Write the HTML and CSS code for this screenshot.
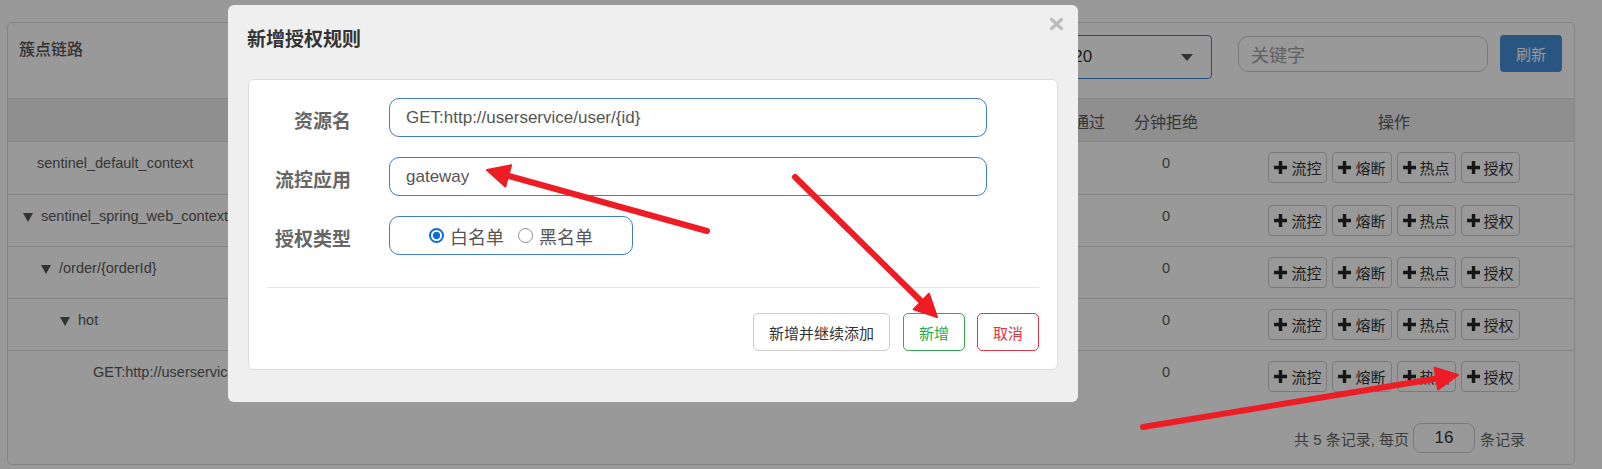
FILE: index.html
```html
<!DOCTYPE html>
<html lang="zh-CN">
<head>
<meta charset="utf-8">
<title>簇点链路</title>
<link rel="stylesheet" href="styles.css">
</head>
<body>
<div class="page">
  <section class="panel">
    <header class="panel-head">
      <h3 class="panel-title">簇点链路</h3>
      <div class="tools">
        <div class="select"><span class="select-val">192.168.150.1:8720</span><span class="caret"></span></div>
        <input class="search" type="text" placeholder="关键字">
        <button class="btn-refresh" type="button">刷新</button>
      </div>
    </header>
    <div class="table">
      <div class="row thead">
        <div class="c">资源名</div><div class="c">通过QPS</div><div class="c">拒绝QPS</div><div class="c">并发数</div><div class="c">平均RT</div><div class="c">分钟通过</div><div class="c">分钟拒绝</div><div class="c">操作</div>
      </div>
      <div class="row trow first">
        <div class="c name lvl0"><span class="leaf"></span>sentinel_default_context</div>
        <div class="c">0</div><div class="c">0</div><div class="c">0</div><div class="c">0</div><div class="c">0</div><div class="c">0</div>
        <div class="c ops"><button class="op"><svg class="plus" viewBox="0 0 13 13"><path d="M4.8 0h3.4v4.8H13v3.4H8.2V13H4.8V8.2H0V4.8h4.8z"/></svg>流控</button><button class="op"><svg class="plus" viewBox="0 0 13 13"><path d="M4.8 0h3.4v4.8H13v3.4H8.2V13H4.8V8.2H0V4.8h4.8z"/></svg>熔断</button><button class="op"><svg class="plus" viewBox="0 0 13 13"><path d="M4.8 0h3.4v4.8H13v3.4H8.2V13H4.8V8.2H0V4.8h4.8z"/></svg>热点</button><button class="op"><svg class="plus" viewBox="0 0 13 13"><path d="M4.8 0h3.4v4.8H13v3.4H8.2V13H4.8V8.2H0V4.8h4.8z"/></svg>授权</button></div>
      </div>
      <div class="row trow">
        <div class="c name lvl0"><span class="tri"></span>sentinel_spring_web_context</div>
        <div class="c">0</div><div class="c">0</div><div class="c">0</div><div class="c">0</div><div class="c">0</div><div class="c">0</div>
        <div class="c ops"><button class="op"><svg class="plus" viewBox="0 0 13 13"><path d="M4.8 0h3.4v4.8H13v3.4H8.2V13H4.8V8.2H0V4.8h4.8z"/></svg>流控</button><button class="op"><svg class="plus" viewBox="0 0 13 13"><path d="M4.8 0h3.4v4.8H13v3.4H8.2V13H4.8V8.2H0V4.8h4.8z"/></svg>熔断</button><button class="op"><svg class="plus" viewBox="0 0 13 13"><path d="M4.8 0h3.4v4.8H13v3.4H8.2V13H4.8V8.2H0V4.8h4.8z"/></svg>热点</button><button class="op"><svg class="plus" viewBox="0 0 13 13"><path d="M4.8 0h3.4v4.8H13v3.4H8.2V13H4.8V8.2H0V4.8h4.8z"/></svg>授权</button></div>
      </div>
      <div class="row trow">
        <div class="c name lvl1"><span class="tri"></span>/order/{orderId}</div>
        <div class="c">0</div><div class="c">0</div><div class="c">0</div><div class="c">0</div><div class="c">0</div><div class="c">0</div>
        <div class="c ops"><button class="op"><svg class="plus" viewBox="0 0 13 13"><path d="M4.8 0h3.4v4.8H13v3.4H8.2V13H4.8V8.2H0V4.8h4.8z"/></svg>流控</button><button class="op"><svg class="plus" viewBox="0 0 13 13"><path d="M4.8 0h3.4v4.8H13v3.4H8.2V13H4.8V8.2H0V4.8h4.8z"/></svg>熔断</button><button class="op"><svg class="plus" viewBox="0 0 13 13"><path d="M4.8 0h3.4v4.8H13v3.4H8.2V13H4.8V8.2H0V4.8h4.8z"/></svg>热点</button><button class="op"><svg class="plus" viewBox="0 0 13 13"><path d="M4.8 0h3.4v4.8H13v3.4H8.2V13H4.8V8.2H0V4.8h4.8z"/></svg>授权</button></div>
      </div>
      <div class="row trow">
        <div class="c name lvl2"><span class="tri"></span>hot</div>
        <div class="c">0</div><div class="c">0</div><div class="c">0</div><div class="c">0</div><div class="c">0</div><div class="c">0</div>
        <div class="c ops"><button class="op"><svg class="plus" viewBox="0 0 13 13"><path d="M4.8 0h3.4v4.8H13v3.4H8.2V13H4.8V8.2H0V4.8h4.8z"/></svg>流控</button><button class="op"><svg class="plus" viewBox="0 0 13 13"><path d="M4.8 0h3.4v4.8H13v3.4H8.2V13H4.8V8.2H0V4.8h4.8z"/></svg>熔断</button><button class="op"><svg class="plus" viewBox="0 0 13 13"><path d="M4.8 0h3.4v4.8H13v3.4H8.2V13H4.8V8.2H0V4.8h4.8z"/></svg>热点</button><button class="op"><svg class="plus" viewBox="0 0 13 13"><path d="M4.8 0h3.4v4.8H13v3.4H8.2V13H4.8V8.2H0V4.8h4.8z"/></svg>授权</button></div>
      </div>
      <div class="row trow">
        <div class="c name lvl3"><span class="leaf"></span>GET:http://userservice/user/{id}</div>
        <div class="c">0</div><div class="c">0</div><div class="c">0</div><div class="c">0</div><div class="c">0</div><div class="c">0</div>
        <div class="c ops"><button class="op"><svg class="plus" viewBox="0 0 13 13"><path d="M4.8 0h3.4v4.8H13v3.4H8.2V13H4.8V8.2H0V4.8h4.8z"/></svg>流控</button><button class="op"><svg class="plus" viewBox="0 0 13 13"><path d="M4.8 0h3.4v4.8H13v3.4H8.2V13H4.8V8.2H0V4.8h4.8z"/></svg>熔断</button><button class="op"><svg class="plus" viewBox="0 0 13 13"><path d="M4.8 0h3.4v4.8H13v3.4H8.2V13H4.8V8.2H0V4.8h4.8z"/></svg>热点</button><button class="op"><svg class="plus" viewBox="0 0 13 13"><path d="M4.8 0h3.4v4.8H13v3.4H8.2V13H4.8V8.2H0V4.8h4.8z"/></svg>授权</button></div>
      </div>
    </div>
    <div class="pager">
      <span>共 5 条记录, 每页</span>
      <span class="pagesize">16</span>
      <span>条记录</span>
    </div>
  </section>
</div>

<div class="backdrop"></div>

<div class="modal">
  <button class="modal-close" type="button"><svg viewBox="0 0 15 14"><path d="M1.5 1.5l12 11M13.5 1.5l-12 11"/></svg></button>
  <h4 class="modal-title">新增授权规则</h4>
  <div class="card">
    <div class="form-row">
      <label class="lbl">资源名</label>
      <input class="field" type="text" value="GET:http://userservice/user/{id}">
    </div>
    <div class="form-row">
      <label class="lbl">流控应用</label>
      <input class="field" type="text" value="gateway">
    </div>
    <div class="form-row">
      <label class="lbl">授权类型</label>
      <div class="radios">
        <span class="radio on"></span><span class="rlabel">白名单</span>
        <span class="radio"></span><span class="rlabel">黑名单</span>
      </div>
    </div>
    <hr class="sep">
    <div class="actions">
      <button class="btn btn-more" type="button">新增并继续添加</button>
      <button class="btn btn-ok" type="button">新增</button>
      <button class="btn btn-cancel" type="button">取消</button>
    </div>
  </div>
</div>

<svg class="annot" viewBox="0 0 1602 469">
  <g class="arrow">
    <line x1="707" y1="231" x2="509" y2="176"/>
    <polygon points="487,170 511.1,165.3 505.3,186.5"/>
  </g>
  <g class="arrow">
    <line x1="795" y1="177" x2="922" y2="302"/>
    <polygon points="937,317 913.6,309.4 929,293.8"/>
  </g>
  <g class="arrow">
    <line x1="1143" y1="427" x2="1437" y2="378.5"/>
    <polygon points="1458,375 1438.1,389.5 1434.5,367.7"/>
  </g>
</svg>
</body>
</html>
```

FILE: styles.css
```css
* { box-sizing: border-box; }

html, body {
  margin: 0;
  padding: 0;
}

body {
  position: relative;
  width: 1602px;
  height: 469px;
  overflow: hidden;
  background: #fff;
  color: #333;
  font-family: "Liberation Sans", Arial, "Noto Sans CJK SC", sans-serif;
}

/* ---------- page underneath ---------- */
.page {
  padding: 22px 27px 0 7px;
}

.panel {
  height: 443px;
  border: 1px solid #ddd;
  border-radius: 5px;
  background: #fff;
}

.panel-head {
  height: 76px;
  display: flex;
  justify-content: space-between;
  align-items: flex-start;
  padding: 12px 12px 0 11px;
  border-bottom: 1px solid #ddd;
}

.panel-title {
  margin: 0;
  font-size: 16px;
  line-height: 26px;
  font-weight: 500;
  color: #555;
  font-family: "Noto Sans CJK SC", sans-serif;
}

.tools {
  display: flex;
  align-items: flex-start;
}

.select {
  width: 284px;
  height: 44px;
  display: flex;
  align-items: center;
  padding: 0 18px 0 12px;
  border: 1px solid #3a80c8;
  border-radius: 4px;
  font-size: 17px;
  color: #333;
}

.caret {
  margin-left: auto;
  width: 0;
  height: 0;
  border-left: 6px solid transparent;
  border-right: 6px solid transparent;
  border-top: 7px solid #555;
}

.search {
  width: 250px;
  height: 36px;
  margin: 1px 12px 0 26px;
  padding: 0 12px;
  border: 1px solid #ccc;
  border-radius: 10px;
  font-size: 18px;
  font-family: "Noto Sans CJK SC", sans-serif;
  color: #333;
  outline: none;
}

.search::placeholder {
  color: #a2a2a2;
}

.btn-refresh {
  width: 62px;
  height: 37px;
  border: 0;
  border-radius: 4px;
  background: #4590d8;
  color: #fff;
  font-size: 15px;
  font-family: "Noto Sans CJK SC", sans-serif;
  padding: 0;
}

.row {
  display: grid;
  grid-template-columns: 660px 90px 90px 90px 90px 90px 96px 360px;
}

.thead {
  height: 42px;
  background: #eee;
}

.thead .c {
  padding-top: 11px;
  line-height: 22px;
  font-size: 16px;
  color: #5a5a5a;
  text-align: center;
  font-family: "Noto Sans CJK SC", sans-serif;
}

.trow {
  height: 52px;
  border-top: 1px solid #ddd;
}

.trow.first {
  height: 53px;
}

.trow .c {
  padding-top: 10px;
  line-height: 22px;
  font-size: 14.5px;
  color: #5a5a5a;
  text-align: center;
}

.trow .name {
  display: flex;
  align-items: flex-start;
  text-align: left;
  white-space: nowrap;
}

.lvl0 { padding-left: 15px; }
.lvl1 { padding-left: 33px; }
.lvl2 { padding-left: 52px; }
.lvl3 { padding-left: 71px; }

.leaf {
  width: 14px;
  flex: none;
}

.tri {
  flex: none;
  width: 0;
  height: 0;
  margin: 8px 8px 0 0;
  border-left: 5px solid transparent;
  border-right: 5px solid transparent;
  border-top: 9px solid #555;
}

.ops {
  display: flex;
  justify-content: center;
  align-items: flex-start;
  gap: 5px;
}

.op {
  height: 31px;
  display: inline-flex;
  align-items: center;
  gap: 4px;
  padding: 0 5px;
  border: 1px solid #ccc;
  border-radius: 4px;
  background: #fff;
  color: #333;
  font-size: 15px;
  font-family: "Noto Sans CJK SC", sans-serif;
}

.plus {
  width: 13px;
  height: 13px;
  fill: #262626;
}

.pager {
  display: flex;
  justify-content: flex-end;
  align-items: center;
  padding: 21px 49px 0 0;
  font-size: 15px;
  color: #666;
  font-family: "Liberation Sans", "Noto Sans CJK SC", sans-serif;
}

.pagesize {
  width: 62px;
  height: 30px;
  margin: 0 5px 0 4px;
  border: 1px solid #ccc;
  border-radius: 8px;
  text-align: center;
  line-height: 28px;
  font-size: 17px;
  color: #333;
}

/* ---------- modal ---------- */
.backdrop {
  position: absolute;
  inset: 0;
  background: rgba(0, 0, 0, 0.4);
}

.modal {
  position: absolute;
  left: 228px;
  top: 5px;
  width: 850px;
  padding: 20px 20px 32px 20px;
  background: #efefef;
  border-radius: 6px;
}

.modal-close {
  position: absolute;
  top: 12px;
  right: 14px;
  width: 15px;
  height: 14px;
  padding: 0;
  border: 0;
  background: none;
}

.modal-close svg {
  display: block;
  width: 15px;
  height: 14px;
  stroke: #bdbdbd;
  stroke-width: 3.2;
  fill: none;
}

.modal-title {
  height: 54px;
  margin: 0 0 0 -1px;
  font-size: 19px;
  line-height: 26px;
  font-weight: bold;
  color: #333;
  font-family: "Noto Sans CJK SC", sans-serif;
}

.card {
  padding: 18px;
  background: #fff;
  border: 1px solid #ddd;
  border-radius: 6px;
}

.form-row {
  display: grid;
  grid-template-columns: 84px 598px;
  column-gap: 38px;
  align-items: center;
  height: 39px;
}

.form-row + .form-row {
  margin-top: 20px;
}

.lbl {
  padding-top: 5px;
  line-height: 30px;
  text-align: right;
  white-space: nowrap;
  font-size: 19px;
  font-weight: bold;
  color: #666;
  font-family: "Noto Sans CJK SC", sans-serif;
}

.field {
  width: 100%;
  height: 39px;
  padding: 0 16px;
  border: 1px solid #3d7fc1;
  border-radius: 10px;
  background: #fff;
  outline: none;
  font-size: 17px;
  color: #555;
  font-family: "Liberation Sans", Arial, sans-serif;
}

.radios {
  width: 244px;
  height: 39px;
  display: flex;
  align-items: center;
  justify-content: center;
  border: 1px solid #3d7fc1;
  border-radius: 10px;
}

.radio {
  width: 15px;
  height: 15px;
  flex: none;
  border: 1.5px solid #8d8d96;
  border-radius: 50%;
  background: #fff;
  margin-right: 6px;
}

.radio.on {
  border: 2px solid #0b6ce0;
  background: radial-gradient(circle, #0b6ce0 0 3.4px, #fff 3.9px);
}

.rlabel {
  font-size: 18px;
  line-height: 24px;
  color: #555;
  font-family: "Noto Sans CJK SC", sans-serif;
}

.rlabel + .radio {
  margin-left: 14px;
}

.sep {
  margin: 32px 0 25px;
  border: 0;
  border-top: 1px solid #e4e4e4;
}

.actions {
  display: flex;
  justify-content: flex-end;
  gap: 12px;
}

.btn {
  height: 38px;
  padding: 0 15px;
  border: 1px solid #ccc;
  border-radius: 5px;
  background: #fff;
  color: #333;
  font-size: 15px;
  font-family: "Noto Sans CJK SC", sans-serif;
}

.btn-more { margin-right: 1px; }

.btn-ok {
  color: #28a745;
  border-color: #34a853;
}

.btn-cancel {
  color: #dc3545;
  border-color: #dc3545;
}

/* ---------- annotation arrows ---------- */
.annot {
  position: absolute;
  left: 0;
  top: 0;
  width: 1602px;
  height: 469px;
  pointer-events: none;
}

.arrow line {
  stroke: #ee1c25;
  stroke-width: 6;
  stroke-linecap: round;
}

.arrow polygon {
  fill: #ee1c25;
  stroke: #ee1c25;
  stroke-width: 2;
  stroke-linejoin: round;
}
```
